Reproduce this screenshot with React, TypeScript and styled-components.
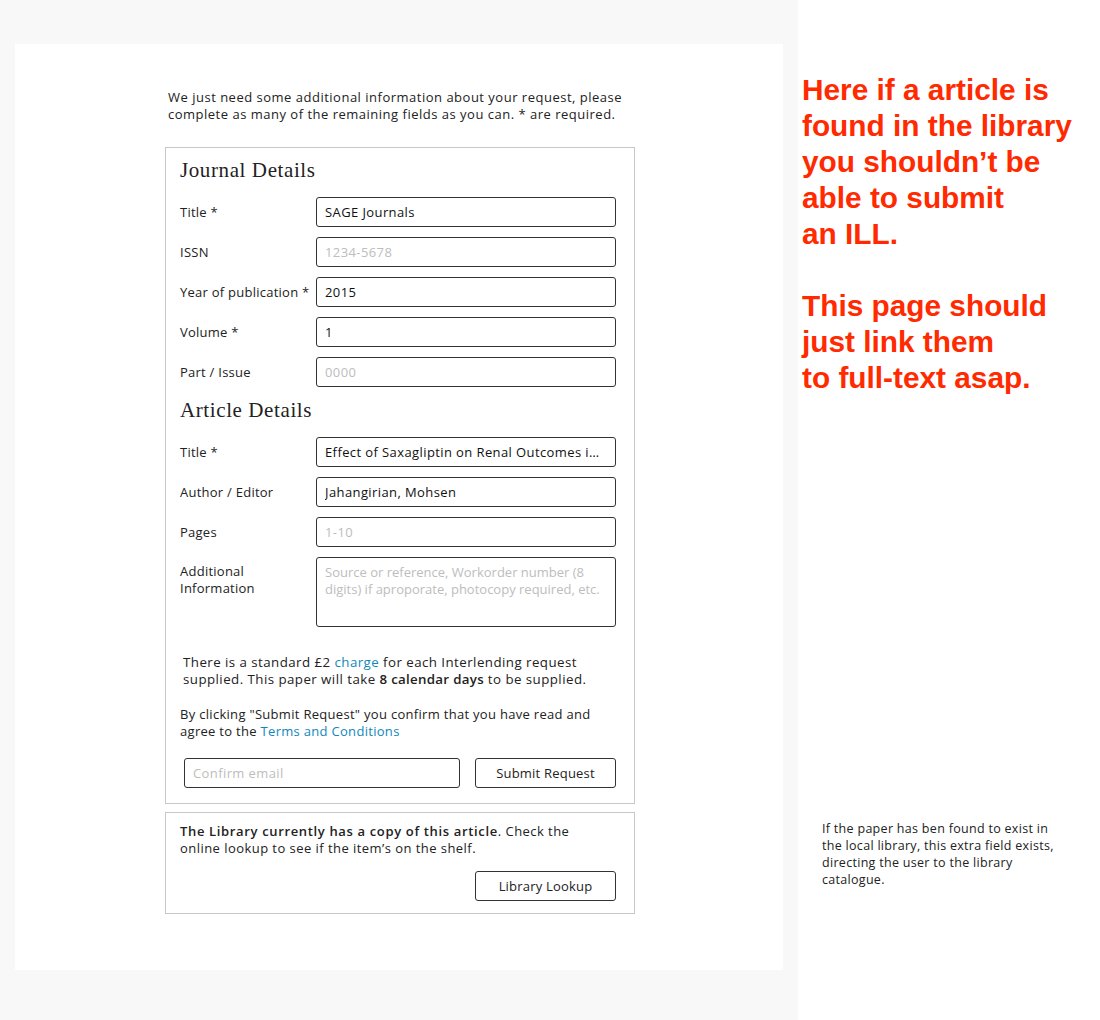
import React from "react";
import styled, { createGlobalStyle } from "styled-components";

const Global = createGlobalStyle`
  html, body { margin: 0; padding: 0; background: #ffffff; }
  body { font-family: "Open Sans", Lato, sans-serif; color: #222; }
  * { box-sizing: border-box; }
`;

const Page = styled.div`
  display: flex;
  width: 1100px;
  height: 1020px;
`;

const Canvas = styled.div`
  width: 798px;
  height: 1020px;
  background: #f8f8f8;
  padding: 44px 15px 50px;
`;

const Card = styled.div`
  background: #fff;
  height: 926px;
  padding: 45px 0 0 2px;
  display: flex;
  flex-direction: column;
  align-items: center;
`;

const Column = styled.div`
  width: 470px;
  display: flex;
  flex-direction: column;
`;

const Intro = styled.p`
  margin: 0 0 24px 3px;
  font-size: 13px;
  line-height: 17px;
  letter-spacing: 0.5px;
  color: #222;
  white-space: nowrap;
`;

const Box = styled.div<{ $tight?: boolean }>`
  border: 1px solid #c8c8c8;
  padding: ${(p) => (p.$tight ? "10px 18px 12px 14px" : "10px 18px 15px 14px")};
  margin-bottom: 8px;
  display: flex;
  flex-direction: column;
`;

const Heading = styled.h2<{ $top?: number }>`
  margin: ${(p) => p.$top ?? 0}px 0 15px;
  font-family: "Liberation Serif", "DejaVu Serif", serif;
  font-weight: normal;
  font-size: 21px;
  letter-spacing: 0.6px;
  line-height: 24px;
  color: #222;
`;

const Rows = styled.div`
  display: flex;
  flex-direction: column;
  gap: 10px;
`;

const Row = styled.div<{ $top?: boolean }>`
  display: flex;
  align-items: ${(p) => (p.$top ? "flex-start" : "center")};
`;

const Label = styled.label<{ $pad?: boolean }>`
  width: 136px;
  flex: none;
  font-size: 13px;
  line-height: 17px;
  letter-spacing: 0.25px;
  padding-top: ${(p) => (p.$pad ? "6px" : "0")};
  white-space: nowrap;
`;

const fieldCss = `
  border: 1px solid #333;
  border-radius: 3px;
  font-family: "Open Sans", Lato, sans-serif;
  font-size: 13px;
  letter-spacing: 0.4px;
  color: #111;
  background: #fff;
  outline: none;
  padding: 0 8px;
  &::placeholder { color: #bdbdbd; }
`;

const Input = styled.input<{ $w?: number; $ml?: number }>`
  ${fieldCss}
  width: ${(p) => p.$w ?? 300}px;
  margin-left: ${(p) => p.$ml ?? 0}px;
  height: 30px;
  text-overflow: ellipsis;
`;

const Area = styled.textarea`
  ${fieldCss}
  width: 300px;
  height: 70px;
  padding: 6px 8px;
  line-height: 17px;
  letter-spacing: 0;
  resize: none;
  display: block;
`;

const Note = styled.p<{ $indent?: number; $top?: number; $size?: number; $track?: number }>`
  margin: ${(p) => p.$top ?? 0}px 0 0 ${(p) => p.$indent ?? 0}px;
  font-size: ${(p) => p.$size ?? 13}px;
  letter-spacing: ${(p) => p.$track ?? 0.45}px;
  line-height: 17px;
  color: #222;
  white-space: nowrap;
`;

const Strong = styled.b<{ $track?: number }>`
  font-weight: 600;
  letter-spacing: ${(p) => p.$track ?? 0.3}px;
  color: #222;
`;

const Link = styled.a`
  color: #1188bb;
  text-decoration: none;
`;

const ActionRow = styled.div<{ $top: number }>`
  display: flex;
  align-items: center;
  justify-content: space-between;
  margin-top: ${(p) => p.$top}px;
`;

const EndRow = styled(ActionRow)`
  justify-content: flex-end;
`;

const Button = styled.button`
  width: 141px;
  height: 30px;
  border: 1px solid #333;
  border-radius: 3px;
  background: #fff;
  font-family: "Open Sans", Lato, sans-serif;
  font-size: 13px;
  letter-spacing: 0.2px;
  color: #222;
  padding: 0;
`;

const Side = styled.div`
  flex: 1;
  padding: 72px 0 0 4px;
  display: flex;
  flex-direction: column;
`;

const Remark = styled.p`
  margin: 0 0 36px;
  font-family: "Liberation Sans", Arial, sans-serif;
  font-weight: bold;
  font-size: 29.8px;
  line-height: 36px;
  color: #ff2a00;
  white-space: nowrap;
`;

const Aside = styled.p`
  margin: 388px 0 0 20px;
  font-size: 12.5px;
  letter-spacing: 0.3px;
  line-height: 17px;
  color: #222;
  white-space: nowrap;
`;

type Field = { label: string; value?: string; placeholder?: string };

const journal: Field[] = [
  { label: "Title *", value: "SAGE Journals" },
  { label: "ISSN", placeholder: "1234-5678" },
  { label: "Year of publication *", value: "2015" },
  { label: "Volume *", value: "1" },
  { label: "Part / Issue", placeholder: "0000" },
];

const article: Field[] = [
  { label: "Title *", value: "Effect of Saxagliptin on Renal Outcomes in Patients with Type 2 Diabetes" },
  { label: "Author / Editor", value: "Jahangirian, Mohsen" },
  { label: "Pages", placeholder: "1-10" },
];

const FieldRows = ({ fields }: { fields: Field[] }) => (
  <>
    {fields.map((f) => (
      <Row key={f.label}>
        <Label>{f.label}</Label>
        <Input defaultValue={f.value} placeholder={f.placeholder} />
      </Row>
    ))}
  </>
);

export default function App() {
  return (
    <Page>
      <Global />
      <Canvas>
        <Card>
          <Column>
            <Intro>
              We just need some additional information about your request, please
              <br />
              complete as many of the remaining fields as you can. * are required.
            </Intro>
            <Box>
              <Heading>Journal Details</Heading>
              <Rows>
                <FieldRows fields={journal} />
              </Rows>
              <Heading $top={11}>Article Details</Heading>
              <Rows>
                <FieldRows fields={article} />
                <Row $top>
                  <Label $pad>
                    Additional
                    <br />
                    Information
                  </Label>
                  <Area placeholder={"Source or reference, Workorder number (8\ndigits) if aproporate, photocopy required, etc."} />
                </Row>
              </Rows>
              <Note $indent={3} $top={27} $size={13.3} $track={0.45}>
                There is a standard £2 <Link href="#">charge</Link> for each Interlending request
                <br />
                supplied. This paper will take <Strong>8 calendar days</Strong> to be supplied.
              </Note>
              <Note $top={18} $track={0.3}>
                By clicking "Submit Request" you confirm that you have read and
                <br />
                agree to the <Link href="#">Terms and Conditions</Link>
              </Note>
              <ActionRow $top={18}>
                <Input $w={276} $ml={4} placeholder="Confirm email" />
                <Button>Submit Request</Button>
              </ActionRow>
            </Box>
            <Box $tight>
              <Note>
                <Strong $track={0.65}>The Library currently has a copy of this article</Strong>. Check the
                <br />
                online lookup to see if the item’s on the shelf.
              </Note>
              <EndRow $top={14}>
                <Button>Library Lookup</Button>
              </EndRow>
            </Box>
          </Column>
        </Card>
      </Canvas>
      <Side>
        <Remark>
          Here if a article is
          <br />
          found in the library
          <br />
          you shouldn’t be
          <br />
          able to submit
          <br />
          an ILL.
        </Remark>
        <Remark>
          This page should
          <br />
          just link them
          <br />
          to full-text asap.
        </Remark>
        <Aside>
          If the paper has ben found to exist in
          <br />
          the local library, this extra field exists,
          <br />
          directing the user to the library
          <br />
          catalogue.
        </Aside>
      </Side>
    </Page>
  );
}
